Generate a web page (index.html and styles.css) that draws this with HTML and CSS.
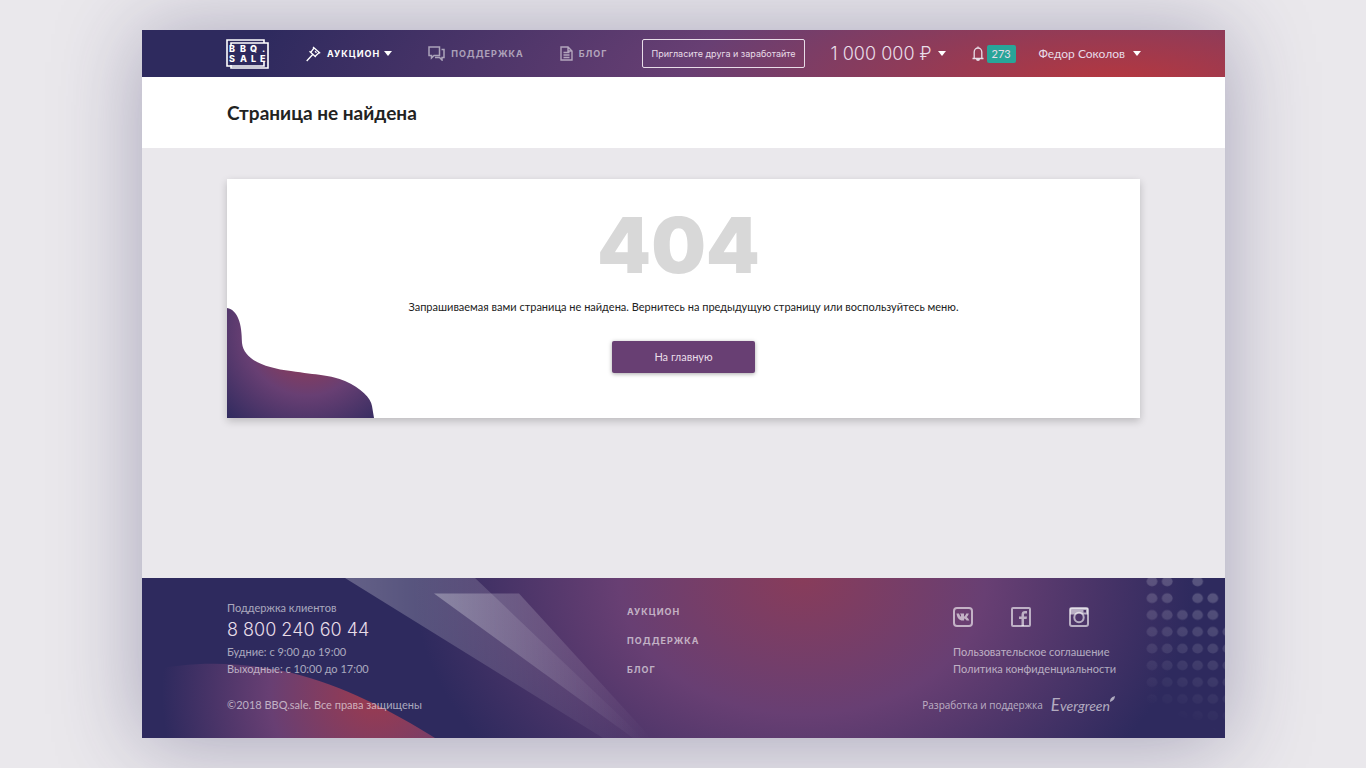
FILE: index.html
```html
<!DOCTYPE html>
<html lang="ru">

<head>
    <meta charset="UTF-8">
    <meta name="viewport" content="width=device-width, initial-scale=1.0">
    <title>BBQ.sale - Страница не найдена</title>
    <link rel="stylesheet" href="styles.css">
</head>

<body>
<div class="page">
    <header class="header">
        <a class="logo" href="#" aria-label="BBQ.SALE">
            <svg width="43" height="30" viewBox="0 0 43 30">
                <g fill="none" stroke="#fff" stroke-width="1.6">
                    <path d="M38 4V1H1V27H6"/>
                    <path d="M5 7V4H42V29H5V26M6 27H38V23"/>
                </g>
                <text x="3 14 24 36" y="13">BBQ.</text>
                <text x="3 14 25 34" y="23">SALE</text>
            </svg>
        </a>
        <nav class="menu">
            <button class="menu-item active" type="button">
                <svg width="15" height="16" viewBox="0 0 15 16">
                    <path stroke-width="1.300" d="M7 1l7.200 6.300M3.500 5.200l6.300 5.800M8 2L4.800 6.300M13.200 6.500l-4 3.700M9 5.300l1.500 1.400M6.700 8.500L.7 15"/>
                </svg>
                Аукцион
                <span class="caret"></span>
            </button>
            <a class="menu-item" href="#">
                <svg width="17" height="15" viewBox="0 0 17 15">
                    <path stroke-width="1.500" d="M1 1h10.500v8.500H6L3.500 12V9.500H1zM13.500 3.500H16v8h-2V14l-2.500-2.500H7"/>
                </svg>
                Поддержка
            </a>
            <a class="menu-item" href="#">
                <svg width="13" height="15" viewBox="0 0 13 15">
                    <path stroke-width="1.400" d="M1 1h7l4 4v9H1zM8 1v4h4M3.500 6.500h6M3.500 9h6M3.500 11.500h6"/>
                </svg>
                Блог
            </a>
        </nav>
        <button class="invite" type="button">Пригласите друга и заработайте</button>
        <button class="balance" type="button">1 000 000 ₽ <span class="caret"></span></button>
        <button class="bell" type="button" aria-label="Уведомления">
            <svg width="12" height="16" viewBox="0 0 12 16">
                <path stroke-width="1.300" d="M.5 12.500h11M2.200 12V6a3.800 4 0 0 1 7.600 0v6M6 2V.5"/>
                <path class="fill" d="M4 13h4a2 2 0 0 1-4 0z"/>
            </svg>
            <span class="badge">273</span>
        </button>
        <button class="user" type="button">Федор Соколов <span class="caret"></span></button>
    </header>

    <div class="title-bar">
        <h1>Страница не найдена</h1>
    </div>

    <main class="content">
        <section class="card">
            <svg class="blob" width="147" height="110" viewBox="0 0 147 110">
                <defs>
                    <radialGradient id="blobFill" gradientUnits="userSpaceOnUse" cx="80" cy="25" r="125">
                        <stop offset="0.15" stop-color="#943a52"/>
                        <stop offset="0.5" stop-color="#683f73"/>
                        <stop offset="0.95" stop-color="#2e2a5e"/>
                    </radialGradient>
                </defs>
                <path fill="url(#blobFill)" d="M0 0C11 2 15 16 15 35C17 52 38 60 64 63C90 67 104 67 118 73C134 80 144 90 145 98L147 110H0z"/>
            </svg>
            <p class="code">404</p>
            <p class="message">Запрашиваемая вами страница не найдена. Вернитесь на предыдущую страницу или воспользуйтесь меню.</p>
            <a class="home" href="#">На главную</a>
        </section>
    </main>

    <footer class="footer">
        <svg class="footer-bg" viewBox="0 0 1083 160" preserveAspectRatio="none">
            <defs>
                <linearGradient id="beam" x1="0" y1="0" x2="1" y2="0">
                    <stop offset="0" stop-color="#fff" stop-opacity="0.26"/>
                    <stop offset="1" stop-color="#fff" stop-opacity="0"/>
                </linearGradient>
                <linearGradient id="beamTop" x1="0" y1="0" x2="1" y2="0">
                    <stop offset="0" stop-color="#fff" stop-opacity="0.3"/>
                    <stop offset="1" stop-color="#fff" stop-opacity="0"/>
                </linearGradient>
                <radialGradient id="hill" gradientUnits="userSpaceOnUse" cx="235" cy="115" r="215">
                    <stop offset="0" stop-color="#9c3a4e"/>
                    <stop offset="0.5" stop-color="#683f73"/>
                    <stop offset="1" stop-color="#2e2a5e"/>
                </radialGradient>
                <linearGradient id="dotFade" gradientUnits="userSpaceOnUse" x1="1070" y1="10" x2="1020" y2="135">
                    <stop offset="0" stop-color="#fff"/>
                    <stop offset="1" stop-color="#000"/>
                </linearGradient>
                <pattern id="dots" patternUnits="userSpaceOnUse" x="1002.400" y="-5" width="15.200" height="16.800">
                    <ellipse cx="7.600" cy="8.400" rx="5.400" ry="5" fill="#fff" fill-opacity="0.2"/>
                </pattern>
                <mask id="dotMask">
                    <rect x="1000" y="0" width="83" height="160" fill="url(#dotFade)"/>
                    <path fill="#000" d="M1033 0h14.500v29H1033zM1063 0h20v11.500h-20zM1078 0h5v45h-5z"/>
                </mask>
            </defs>
            <path fill="url(#beam)" d="M203 0H333L501 160H461z"/>
            <path fill="url(#beamTop)" d="M292 15.500H377L509 160H491z"/>
            <path fill="url(#hill)" d="M0 94C60 80 110 86 150 95C200 107 250 133 293 160H0z"/>
            <rect x="1002" y="0" width="81" height="160" fill="url(#dots)" mask="url(#dotMask)"/>
        </svg>
        <div class="contacts">
            <p>Поддержка клиентов</p>
            <a class="phone" href="tel:88002406044">8 800 240 60 44</a>
            <p>Будние: с 9:00 до 19:00</p>
            <p>Выходные: с 10:00 до 17:00</p>
            <p class="copyright">©2018 BBQ.sale. Все права защищены</p>
        </div>
        <nav class="footer-menu">
            <a href="#">Аукцион</a>
            <a href="#">Поддержка</a>
            <a href="#">Блог</a>
        </nav>
        <div class="legal">
            <div class="social">
                <a href="#" aria-label="VK">
                    <svg width="20" height="20" viewBox="0 0 20 20">
                        <rect x="1" y="1" width="18" height="18" rx="3"/>
                        <path class="fill" d="M3.500 6.500h2.500c.5 1.500 1.100 2.800 2 3.300V8L7 6.500h4v3.300c.8-.4 1.700-1.700 2.200-3.300h2.600c-.3 1.400-1.300 2.800-2.200 3.600 1.200.7 2.200 2 2.700 3.400h-2.800c-.5-1-1.300-1.700-2.400-1.900v1.900H9.500C6.500 13.500 4 11 3.500 6.500z"/>
                    </svg>
                </a>
                <a href="#" aria-label="Facebook">
                    <svg width="20" height="20" viewBox="0 0 20 20">
                        <rect x="1" y="1" width="18" height="18" rx="1"/>
                        <path class="fill" d="M10.500 19v-7H8V9.500h2.500V7.500c0-2.400 1.500-3.500 3.500-3.500h2v2.500h-1.500c-1.200 0-1.500.5-1.500 1.400v1.600h3L15.600 12H13v7z"/>
                    </svg>
                </a>
                <a href="#" aria-label="Instagram">
                    <svg width="20" height="20" viewBox="0 0 20 20">
                        <rect x="1" y="1" width="18" height="18" rx="2"/>
                        <path class="fill" fill-rule="evenodd" d="M1 1h18v6.500h-5.500a4.600 4.600 0 0 0-7 0H1zM14.500 3v2.500H17V3z"/>
                        <circle cx="10" cy="10.500" r="4.700"/>
                    </svg>
                </a>
            </div>
            <a href="#">Пользовательское соглашение</a>
            <a href="#">Политика конфиденциальности</a>
            <a class="developer" href="#">
                Разработка и поддержка
                <span class="evergreen">Evergreen<svg width="5" height="6" viewBox="0 0 5 6"><path d="M0 6C0 2 2 1 5 0C5 3 3 5 0 6z"/></svg></span>
            </a>
        </div>
    </footer>
</div>
</body>

</html>
```
FILE: styles.css
```css
* {
  box-sizing: border-box;
}
body {
  margin: 0;
  padding: 30px 141px 30px 142px;
  background: #eae8ec;
  color: #222;
  font-family: Lato, Inter, sans-serif;
  font-size: 11px;
}
h1, p {
  margin: 0;
}
a {
  color: inherit;
  text-decoration: none;
}
button {
  padding: 0;
  border: 0;
  background: none;
  color: inherit;
  font: inherit;
  white-space: nowrap;
  cursor: pointer;
}
svg {
  flex: none;
  fill: none;
  stroke: currentColor;
}
svg .fill {
  fill: currentColor;
  stroke: none;
}
.page {
  display: flex;
  flex-direction: column;
  min-height: calc(100vh - 60px);
  background: #eae8ec;
  box-shadow: 0 4px 80px rgba(46, 42, 94, 0.36);
}
.caret {
  border: 4px solid transparent;
  border-top: 5px solid #fff;
  border-bottom: 0;
}

/* header */
.header {
  display: flex;
  align-items: center;
  height: 47px;
  padding: 0 84px;
  color: #e8dde8;
  background: radial-gradient(870px 250px at 90% 120%, #b8373d 0%, #683f73 50%, #2e2a5e 100%);
}
.logo {
  display: flex;
}
.logo text {
  fill: #fff;
  stroke: none;
  font-family: Inter, sans-serif;
  font-size: 9px;
  font-weight: 800;
}
.menu {
  display: flex;
  gap: 36px;
  margin-left: 37px;
}
.menu-item {
  display: flex;
  align-items: center;
  gap: 6px;
  color: rgba(255, 255, 255, 0.55);
  font-family: Inter, sans-serif;
  font-size: 9px;
  font-weight: 700;
  letter-spacing: 1px;
  text-transform: uppercase;
}
.menu-item.active {
  color: #fff;
}
.menu-item .caret {
  margin-left: -2px;
}
.invite {
  height: 29px;
  margin-left: 35px;
  padding: 0 8px;
  border: 1px solid #e8dde8;
  border-radius: 2px;
  font-family: Inter, sans-serif;
  font-size: 9px;
}
.balance {
  display: flex;
  align-items: center;
  gap: 6px;
  margin-left: 26px;
  font-family: Inter, sans-serif;
  font-size: 18px;
  font-weight: 300;
}
.bell {
  display: flex;
  align-items: center;
  gap: 3px;
  margin-left: 26px;
}
.badge {
  padding: 0 5px;
  border-radius: 2px;
  background: #28a599;
  line-height: 18px;
}
.user {
  display: flex;
  align-items: center;
  gap: 8px;
  margin-left: auto;
  font-size: 12px;
}

/* content */
.title-bar {
  padding: 23px 85px 22px;
  background: #fff;
}
.title-bar h1 {
  font-size: 19px;
  font-weight: 700;
  line-height: 26px;
}
.content {
  flex: 1;
  padding: 31px 85px;
}
.card {
  position: relative;
  display: flex;
  flex-direction: column;
  align-items: center;
  padding: 24px 20px 45px;
  background: #fff;
  box-shadow: 0 3px 8px rgba(0, 0, 0, 0.2);
}
.blob {
  position: absolute;
  left: 0;
  bottom: 0;
  stroke: none;
}
.code {
  padding-right: 10px;
  color: #d8d8d8;
  font-family: Inter, sans-serif;
  font-size: 77px;
  font-weight: 900;
  line-height: 84px;
}
.message {
  margin-top: 10px;
  line-height: 20px;
  text-align: center;
}
.home {
  margin-top: 24px;
  padding: 0 42px;
  border-radius: 2px;
  background: #683f73;
  box-shadow: 0 1px 4px rgba(0, 0, 0, 0.35);
  color: #e8dde8;
  line-height: 32px;
}

/* footer */
.footer {
  position: relative;
  display: grid;
  grid-template-columns: 400px 1fr auto;
  padding: 21px 110px 24px 85px;
  color: rgba(255, 255, 255, 0.6);
  line-height: 17px;
  background: radial-gradient(390px 290px at 61% 0, #883c5a 0%, #683f73 47%, #2e2a5e 100%);
}
.footer-bg {
  position: absolute;
  top: 0;
  left: 0;
  width: 100%;
  height: 100%;
  stroke: none;
}
.contacts, .footer-menu, .legal {
  position: relative;
}
.phone {
  display: block;
  color: #e8dde8;
  font-family: Inter, sans-serif;
  font-size: 18px;
  font-weight: 300;
  line-height: 27px;
}
.copyright {
  margin-top: 19px;
}
.footer-menu {
  display: flex;
  flex-direction: column;
  align-items: flex-start;
  gap: 12px;
  padding-top: 4px;
  font-family: Inter, sans-serif;
  font-size: 9px;
  font-weight: 700;
  letter-spacing: 1px;
  text-transform: uppercase;
}
.legal {
  display: flex;
  flex-direction: column;
  align-items: flex-end;
}
.legal > a {
  width: 162px;
  white-space: nowrap;
}
.social {
  display: flex;
  gap: 38px;
  width: 162px;
  padding: 8px 0 16px;
}
.social a {
  display: flex;
}
.social svg {
  stroke-width: 2;
}
.legal .developer {
  display: flex;
  align-items: center;
  gap: 8px;
  width: auto;
  margin-top: 19px;
  font-family: "Open Sans", sans-serif;
  font-size: 10px;
}
.evergreen {
  display: block;
  font-family: Lato, sans-serif;
  font-size: 14px;
  font-style: italic;
}
.evergreen::first-letter {
  font-size: 17px;
}
.evergreen svg {
  vertical-align: top;
  fill: currentColor;
  stroke: none;
}
```
